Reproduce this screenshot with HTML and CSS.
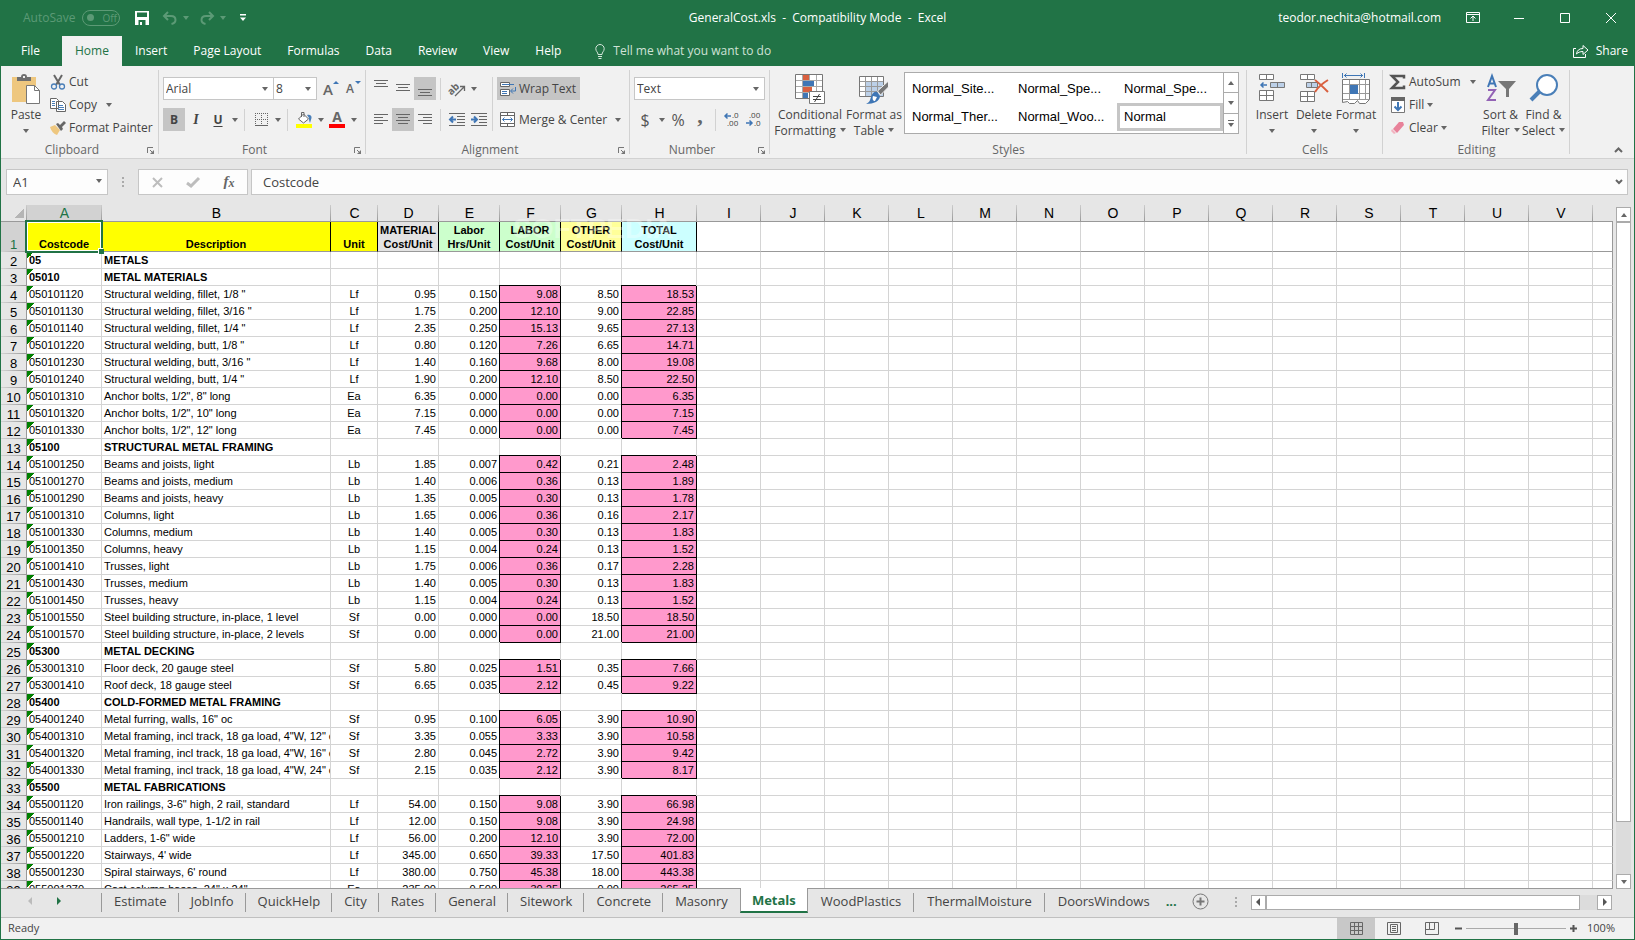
FILE: index.html
```html
<!DOCTYPE html>
<html lang="en">
<head>
    <meta charset="UTF-8">
    <meta name="viewport" content="width=device-width, initial-scale=1.0">
    <title>GeneralCost.xls - Excel</title>
    <link rel="stylesheet" href="styles.css">
</head>
<body>
    <header class="titlebar">
        <div class="quick">
            <label class="autosave" for="autosave">AutoSave</label>
            <span class="switch"><input type="checkbox" id="autosave" disabled>Off</span>
            <button type="button" class="quick-btn save" aria-label="Save"><svg width="14" height="14" viewBox="0 0 14 14"><path fill="#fff" fill-rule="evenodd" d="M0 0h14v14H0zM2 1.500v4.500h10V1.500zM3.500 9v5h7V9z"/><path fill="#fff" d="M5 11h2v3H5z"/></svg></button>
            <button type="button" class="quick-btn" aria-label="Undo"><svg width="16" height="14" viewBox="0 0 16 14" fill="none" stroke="#5c9a76" stroke-width="2"><path d="M6 1L2 5l4 4M2 5h7c3 0 4.500 1.500 4.500 4s-2 3.500-4 4"/></svg></button>
            <i class="caret faded"></i>
            <button type="button" class="quick-btn" aria-label="Redo"><svg width="16" height="14" viewBox="0 0 16 14" fill="none" stroke="#5c9a76" stroke-width="2"><path d="M10 1l4 4-4 4M14 5H7C4 5 2.500 6.500 2.500 9s2 3.500 4 4"/></svg></button>
            <i class="caret faded"></i>
            <button type="button" class="quick-btn more" aria-label="Customize"><svg width="6" height="8" viewBox="0 0 6 8" fill="#fff"><path d="M0 0h6v1.500H0zM0 3.500h6L3 7z"/></svg></button>
        </div>
        <div class="doc-title">GeneralCost.xls&nbsp; -&nbsp; Compatibility Mode&nbsp; -&nbsp; Excel</div>
        <div class="window-tools">
            <span class="account">teodor.nechita@hotmail.com</span>
            <button type="button" aria-label="Ribbon options"><svg width="14" height="11" viewBox="0 0 14 11" fill="none" stroke="#fff"><path d="M.5.5h13v10H.5zM.5 2.500h13M7 9V4.500M4.500 6.500L7 4l2.500 2.500"/></svg></button>
            <button type="button" aria-label="Minimize"><svg width="10" height="10" viewBox="0 0 10 10" stroke="#fff"><path d="M0 5.500h10"/></svg></button>
            <button type="button" aria-label="Maximize"><svg width="10" height="10" viewBox="0 0 10 10" fill="none" stroke="#fff"><path d="M.5.5h9v9h-9z"/></svg></button>
            <button type="button" aria-label="Close"><svg width="10" height="10" viewBox="0 0 10 10" stroke="#fff"><path d="M0 0l10 10M10 0L0 10"/></svg></button>
        </div>
    </header>

    <nav class="tabs">
        <button type="button" class="tab file">File</button>
        <button type="button" class="tab active">Home</button>
        <button type="button" class="tab">Insert</button>
        <button type="button" class="tab">Page Layout</button>
        <button type="button" class="tab">Formulas</button>
        <button type="button" class="tab">Data</button>
        <button type="button" class="tab">Review</button>
        <button type="button" class="tab">View</button>
        <button type="button" class="tab">Help</button>
        <button type="button" class="tab tell"><svg width="10" height="15" viewBox="0 0 10 15" fill="none" stroke="#d5e6db"><path d="M3 10.500C3 8 .8 7.500.8 4.700a4.200 4.200 0 0 1 8.400 0C9.200 7.500 7 8 7 10.500zM3 12.500h4M3.500 14.500h3"/></svg>Tell me what you want to do</button>
        <button type="button" class="share"><svg width="16" height="14" viewBox="0 0 16 14" fill="none" stroke="#fff"><path d="M3 4.500H.5v9h12V10M3.500 10C4 6.500 6 4.500 10 4.500V1.500l5 4.500-5 4.500v-3C7 7.500 5 8.500 3.500 10z"/></svg>Share</button>
    </nav>

    <section class="ribbon">
        <div class="group clipboard">
            <div class="group-body">
                <button type="button" class="large"><svg class="pic" width="30" height="32" viewBox="0 0 30 32"><path fill="#eec77f" d="M1 4h24v25H1z"/><path fill="#6f6f6f" d="M6 8V4h4c0-2 1-3 3-3s3 1 3 3h4v4z"/><path fill="#f0f0f0" d="M12 3h2v2h-2z"/><path fill="#fff" stroke="#777" d="M15.500 12.500h8l5 5v13h-13z"/><path fill="none" stroke="#777" d="M23.500 12.500v5h5"/></svg>Paste<i class="caret"></i></button>
                <div class="stack">
                    <button type="button" class="small"><svg width="16" height="16" viewBox="0 0 16 16" fill="none"><path stroke="#666" stroke-width="2" d="M4 1l6 10M12 1L6 11"/><circle cx="4" cy="12.500" r="2.500" stroke="#4a7fb8" stroke-width="1.300"/><circle cx="12" cy="12.500" r="2.500" stroke="#4a7fb8" stroke-width="1.300"/></svg>Cut</button>
                    <button type="button" class="small"><svg width="16" height="16" viewBox="0 0 16 16"><path fill="#fff" stroke="#666" d="M.5 1.500h6l2 2v8h-8zM6.500 4.500h6l3 3v7h-9z"/><path stroke="#4a7fb8" d="M2 4.500h3M2 6.500h3M2 8.500h3M8 8.500h5M8 10.500h6M8 12.500h6"/></svg>Copy<i class="caret gap"></i></button>
                    <button type="button" class="small"><svg width="16" height="16" viewBox="0 0 16 16"><path fill="#eec77f" d="M0 7l5-2 5 5-3 5c-3-1-6-4-7-8z"/><path fill="#666" d="M6 4l2-1 2 2 4-4 2 2-4 4 1 2-2 2z"/></svg>Format Painter</button>
                </div>
            </div>
            <div class="group-name"><span>Clipboard</span><button type="button" class="launcher" aria-label="Clipboard options"><svg width="7" height="7" viewBox="0 0 7 7"><path fill="none" stroke="#777" d="M.5 6V.5H6M3 3l3 3"/><path fill="#777" d="M7 3v4H3z"/></svg></button></div>
        </div>

        <div class="group font">
            <div class="group-body rows">
                <div class="row">
                    <span class="combo font-name"><select aria-label="Font"><option>Arial</option></select></span>
                    <span class="combo font-size"><select aria-label="Font size"><option>8</option></select></span>
                    <button type="button" class="tool grow">A<i class="up"></i></button>
                    <button type="button" class="tool shrink">A<i class="down"></i></button>
                </div>
                <div class="row">
                    <button type="button" class="tool on bold">B</button>
                    <button type="button" class="tool italic">I</button>
                    <button type="button" class="tool underline">U</button>
                    <button type="button" class="drop" aria-label="Underline style"><i class="caret"></i></button>
                    <i class="sep"></i>
                    <button type="button" class="tool" aria-label="Borders"><svg width="13" height="13" viewBox="0 0 13 13" stroke="#666"><path stroke-dasharray="1 1" d="M0 .5h13M0 6.500h13M.5 0v13M6.500 0v13M12.500 0v13"/><path d="M0 12.500h13"/></svg></button>
                    <button type="button" class="drop" aria-label="Border style"><i class="caret"></i></button>
                    <i class="sep"></i>
                    <button type="button" class="tool" aria-label="Fill color"><svg width="16" height="17" viewBox="0 0 16 17"><path fill="#fff" stroke="#666" d="M2.500 8l5-5 5 5-5 4z"/><path fill="none" stroke="#666" d="M5.500 6V1.500h2.500V6"/><path fill="#4a7fb8" d="M11 4c3-1 5 1 4.500 3L14 12c-1-2-1-4-1-5z"/><path fill="#ff0" d="M0 13h16v4H0z"/></svg></button>
                    <button type="button" class="drop" aria-label="Fill colors"><i class="caret"></i></button>
                    <button type="button" class="tool font-color">A</button>
                    <button type="button" class="drop" aria-label="Font colors"><i class="caret"></i></button>
                </div>
            </div>
            <div class="group-name"><span>Font</span><button type="button" class="launcher" aria-label="Font options"><svg width="7" height="7" viewBox="0 0 7 7"><path fill="none" stroke="#777" d="M.5 6V.5H6M3 3l3 3"/><path fill="#777" d="M7 3v4H3z"/></svg></button></div>
        </div>

        <div class="group alignment">
            <div class="group-body">
                <div class="rows">
                    <div class="row">
                        <button type="button" class="tool" aria-label="Top align"><svg width="14" height="17" viewBox="0 0 14 17" stroke="#666"><path d="M0 .5h14M2 3.500h10M0 6.500h14"/></svg></button>
                        <button type="button" class="tool" aria-label="Middle align"><svg width="14" height="17" viewBox="0 0 14 17" stroke="#666"><path d="M0 4.500h14M2 7.500h10M0 10.500h14"/></svg></button>
                        <button type="button" class="tool on" aria-label="Bottom align"><svg width="14" height="17" viewBox="0 0 14 17" stroke="#666"><path d="M0 9.500h14M2 12.500h10M0 15.500h14"/></svg></button>
                        <i class="sep"></i>
                        <button type="button" class="tool" aria-label="Orientation"><svg width="17" height="16" viewBox="0 0 17 16"><text class="orient" x="-1" y="11" transform="rotate(-45 5 9)">ab</text><path fill="none" stroke="#666" stroke-width="1.300" d="M6 15l9-9M11 5.500h4.500V10"/></svg></button>
                        <button type="button" class="drop" aria-label="Orientation options"><i class="caret"></i></button>
                    </div>
                    <div class="row">
                        <button type="button" class="tool" aria-label="Align left"><svg width="14" height="11" viewBox="0 0 14 11" stroke="#666"><path d="M0 .5h14M0 3.500h9M0 6.500h14M0 9.500h9"/></svg></button>
                        <button type="button" class="tool on" aria-label="Center"><svg width="14" height="11" viewBox="0 0 14 11" stroke="#666"><path d="M0 .5h14M2 3.500h10M0 6.500h14M2 9.500h10"/></svg></button>
                        <button type="button" class="tool" aria-label="Align right"><svg width="14" height="11" viewBox="0 0 14 11" stroke="#666"><path d="M0 .5h14M5 3.500h9M0 6.500h14M5 9.500h9"/></svg></button>
                        <i class="sep"></i>
                        <button type="button" class="tool" aria-label="Decrease indent"><svg width="16" height="13" viewBox="0 0 16 13"><path stroke="#666" d="M0 .5h16M8 3.500h8M8 6.500h8M8 9.500h8M0 12.500h16"/><path fill="none" stroke="#3f76b5" stroke-width="2" d="M7 6.500H1M4 3.500l-3 3 3 3"/></svg></button>
                        <button type="button" class="tool" aria-label="Increase indent"><svg width="16" height="13" viewBox="0 0 16 13"><path stroke="#666" d="M0 .5h16M8 3.500h8M8 6.500h8M8 9.500h8M0 12.500h16"/><path fill="none" stroke="#3f76b5" stroke-width="2" d="M0 6.500h6M3 3.500l3 3-3 3"/></svg></button>
                    </div>
                </div>
                <i class="sep tall"></i>
                <div class="rows">
                    <button type="button" class="wide on"><svg width="17" height="16" viewBox="0 0 17 16"><path fill="#fff" stroke="#666" d="M.5 1.500h9v4h-9zM.5 8.500h9v6h-9z"/><path fill="none" stroke="#3f76b5" d="M2 3.500h12M2 10.500h5M2 12.500h5M15.500 6v4H11M13 7.500L10.500 10l2.500 2.500"/></svg>Wrap Text</button>
                    <button type="button" class="wide"><svg width="17" height="16" viewBox="0 0 17 16"><path fill="#fff" stroke="#666" d="M.5.5h14v14H.5zM.5 3.500h14M.5 11.500h14M7.500.5v3M7.500 11.500v3"/><path fill="none" stroke="#3f76b5" d="M2.500 7.500h10M4.500 5.500l-2 2 2 2M10.500 5.500l2 2-2 2"/></svg>Merge &amp; Center<i class="caret gap"></i></button>
                </div>
            </div>
            <div class="group-name"><span>Alignment</span><button type="button" class="launcher" aria-label="Alignment options"><svg width="7" height="7" viewBox="0 0 7 7"><path fill="none" stroke="#777" d="M.5 6V.5H6M3 3l3 3"/><path fill="#777" d="M7 3v4H3z"/></svg></button></div>
        </div>

        <div class="group number">
            <div class="group-body rows">
                <div class="row">
                    <span class="combo format"><select aria-label="Number format"><option>Text</option></select></span>
                </div>
                <div class="row">
                    <button type="button" class="tool sign">$</button>
                    <button type="button" class="drop" aria-label="Currency"><i class="caret"></i></button>
                    <button type="button" class="tool sign">%</button>
                    <button type="button" class="tool comma">,</button>
                    <i class="sep"></i>
                    <button type="button" class="tool" aria-label="Increase decimal"><svg class="digits" width="16" height="15" viewBox="0 0 16 15"><text x="8" y="6">.0</text><text x="3" y="14">.00</text><path fill="none" stroke="#3f76b5" stroke-width="1.500" d="M7 4H1M3.500 1.500L1 4l2.500 2.500"/></svg></button>
                    <button type="button" class="tool" aria-label="Decrease decimal"><svg class="digits" width="16" height="15" viewBox="0 0 16 15"><text x="3" y="6">.00</text><text x="8" y="14">.0</text><path fill="none" stroke="#3f76b5" stroke-width="1.500" d="M0 11h6M3.500 8.500L6 11l-2.500 2.500"/></svg></button>
                </div>
            </div>
            <div class="group-name"><span>Number</span><button type="button" class="launcher" aria-label="Number options"><svg width="7" height="7" viewBox="0 0 7 7"><path fill="none" stroke="#777" d="M.5 6V.5H6M3 3l3 3"/><path fill="#777" d="M7 3v4H3z"/></svg></button></div>
        </div>

        <div class="group styles">
            <div class="group-body">
                <button type="button" class="large cond"><svg class="pic" width="30" height="32" viewBox="0 0 30 32"><path fill="#fff" stroke="#777" d="M.5 1.500h27v24H.5z"/><path stroke="#aaa" d="M7.500 2v23M14.500 2v23M21.500 2v23M1 7.500h26M1 13.500h26M1 19.500h26"/><path fill="#d9603f" d="M8 2h6v5H8zM8 14h9v5H8z"/><path fill="#3f76b5" d="M8 8h11v5H8zM8 20h5v5H8z"/><path fill="#fff" stroke="#777" d="M14.500 18.500h15v12h-15z"/><path stroke="#444" d="M18 23.500h8M18 26.500h8M24.500 21l-5 8"/></svg>Conditional<span>Formatting<i class="caret"></i></span></button>
                <button type="button" class="large table-style"><svg class="pic" width="30" height="32" viewBox="0 0 30 32"><path fill="#fff" stroke="#777" d="M.5 3.500h24v20H.5z"/><path fill="#bcd0e8" d="M7 9h17v14H7z"/><path stroke="#999" d="M6.500 4v19M12.500 4v19M18.500 4v19M1 8.500h23M1 13.500h23M1 18.500h23"/><path fill="#777" stroke="#f1f1f1" d="M29.500 8v6l-8 8-3-4z"/><path fill="#3f76b5" d="M18 19l3 4c0 5-6 8-14 8 4-2 4-4 5-7 1-4 4-6 6-5z"/><path fill="#fff" d="M14 23l4 1-2 4c-2 0-3-2-2-5z"/></svg>Format as<span>Table<i class="caret"></i></span></button>
                <div class="gallery">
                    <div class="gallery-items">
                        <button type="button">Normal_Site...</button>
                        <button type="button">Normal_Spe...</button>
                        <button type="button">Normal_Spe...</button>
                        <button type="button">Normal_Ther...</button>
                        <button type="button">Normal_Woo...</button>
                        <button type="button" class="picked">Normal</button>
                    </div>
                    <div class="gallery-scroll">
                        <button type="button" aria-label="Previous styles"><i class="caret flip"></i></button>
                        <button type="button" aria-label="Next styles"><i class="caret"></i></button>
                        <button type="button" class="more" aria-label="More styles"><i class="caret"></i></button>
                    </div>
                </div>
            </div>
            <div class="group-name"><span>Styles</span></div>
        </div>

        <div class="group cells">
            <div class="group-body">
                <button type="button" class="large"><svg class="pic" width="28" height="32" viewBox="0 0 28 32"><path fill="#fff" stroke="#777" d="M1.500 1.500h14v5h-14zM8.500 1.500v5M1.500 17.500h14v10h-14zM8.500 17.500v10M1.500 22.500h14"/><path fill="#bcd0e8" stroke="#777" d="M12.500 9.500h14v5h-14zM19.500 9.500v5"/><path fill="none" stroke="#3f76b5" stroke-width="1.500" d="M9 12H3M5.500 9.500L3 12l2.500 2.500"/></svg>Insert<i class="caret"></i></button>
                <button type="button" class="large"><svg class="pic" width="30" height="32" viewBox="0 0 30 32"><path fill="#fff" stroke="#777" d="M1.500 1.500h14v5h-14zM8.500 1.500v5M1.500 18.500h14v10h-14zM8.500 18.500v10M1.500 23.500h14"/><path fill="#bcd0e8" stroke="#777" d="M7.500 9.500h11v5h-11zM12.500 9.500v5"/><path fill="none" stroke="#d9603f" stroke-width="2" d="M16 7c4 3 9 8 13 12M29 7c-5 3-10 7-13 12"/></svg>Delete<i class="caret"></i></button>
                <button type="button" class="large"><svg class="pic" width="28" height="32" viewBox="0 0 28 32"><path fill="none" stroke="#3f76b5" d="M.5 0v5M22.500 0v5M2 2.500h19M4.500.5l-2 2 2 2M18.500.5l2 2-2 2"/><path fill="#fff" stroke="#777" d="M.5 6.500h27v20l-4 4h-6l-2-3-3 3h-5l-2-2-5 1z"/><path stroke="#999" d="M7.500 7v19M17.500 7v19M1 11.500h26M1 20.500h26M1 26.500h26M23.500 7v19"/><path fill="#3f76b5" d="M8 12h8v9H8z"/></svg>Format<i class="caret"></i></button>
            </div>
            <div class="group-name"><span>Cells</span></div>
        </div>

        <div class="group editing">
            <div class="group-body">
                <div class="stack">
                    <button type="button" class="small"><svg width="16" height="16" viewBox="0 0 16 16"><path fill="none" stroke="#555" stroke-width="2.500" d="M14 4.500V2H2l6 6-6 6h12v-2.500"/></svg>AutoSum<i class="caret gap"></i></button>
                    <button type="button" class="small"><svg width="16" height="16" viewBox="0 0 16 16"><path fill="#fff" stroke="#777" d="M1.500.5h13v15h-13z"/><path fill="#666" d="M1 0h14v4H1z"/><path fill="none" stroke="#3f76b5" stroke-width="2" d="M8 5v8M4.500 9.500L8 13l3.500-3.500"/></svg>Fill<i class="caret"></i></button>
                    <button type="button" class="small"><svg width="16" height="16" viewBox="0 0 16 16"><path fill="#e8829a" d="M9 2h4l1 3-7 8-4-4z"/><path fill="#f2b3c0" d="M2 9l4 4-2 1-3-3z"/></svg>Clear<i class="caret"></i></button>
                </div>
                <button type="button" class="large"><svg class="pic" width="30" height="32" viewBox="0 0 30 32"><g fill="none" stroke-width="2"><path stroke="#3f76b5" d="M2 14L6 3l4 11M3.500 10.500h5"/><path stroke="#9363b5" d="M2 17h7L2 27h8"/></g><path fill="#777" d="M12 8h18l-7 8v8h-3v-8z"/></svg>Sort &amp;<span>Filter<i class="caret"></i></span></button>
                <button type="button" class="large"><svg class="pic" width="30" height="32" viewBox="0 0 30 32" fill="none" stroke="#4a7fb8"><path stroke-width="4" d="M2 27l9-9"/><circle cx="18" cy="12" r="10" fill="#fff" stroke-width="2"/></svg>Find &amp;<span>Select<i class="caret"></i></span></button>
            </div>
            <div class="group-name"><span>Editing</span></div>
        </div>
        <button type="button" class="collapse" aria-label="Collapse ribbon"><svg width="9" height="6" viewBox="0 0 9 6" fill="none" stroke="#666" stroke-width="2"><path d="M1 5l3.500-3.500L8 5"/></svg></button>
    </section>

    <section class="formula-bar">
        <span class="combo name-box"><input type="text" value="A1" aria-label="Name box"></span>
        <i class="grip"></i>
        <div class="formula-tools">
            <button type="button" aria-label="Cancel"><svg width="11" height="11" viewBox="0 0 11 11" stroke="#bdbdbd" stroke-width="2"><path d="M1 1l9 9M10 1l-9 9"/></svg></button>
            <button type="button" aria-label="Enter"><svg width="14" height="11" viewBox="0 0 14 11" fill="none" stroke="#bdbdbd" stroke-width="3"><path d="M1 6l4 3 8-8"/></svg></button>
            <button type="button" class="fx">f<sub>x</sub></button>
        </div>
        <div class="formula">
            <input type="text" value="Costcode" aria-label="Formula">
            <svg width="8" height="6" viewBox="0 0 8 6" fill="none" stroke="#666" stroke-width="2"><path d="M1 1l3 3 3-3"/></svg>
        </div>
    </section>

    <main class="sheet">
        <div class="grid">
            <table id="cells"></table>
            <span class="watermark">SOFTPEDIA</span>
        </div>
        <div class="vscroll">
            <button type="button" aria-label="Scroll up"><i class="caret flip"></i></button>
            <div class="track"><div class="thumb"></div></div>
            <button type="button" aria-label="Scroll down"><i class="caret"></i></button>
        </div>
    </main>

    <nav class="sheet-tabs">
        <div class="sheet-nav"><i class="arrow left faded"></i><i class="arrow right green"></i></div>
        <button type="button">Estimate</button>
        <button type="button">JobInfo</button>
        <button type="button">QuickHelp</button>
        <button type="button">City</button>
        <button type="button">Rates</button>
        <button type="button">General</button>
        <button type="button">Sitework</button>
        <button type="button">Concrete</button>
        <button type="button" class="before">Masonry</button>
        <button type="button" class="current">Metals</button>
        <button type="button">WoodPlastics</button>
        <button type="button">ThermalMoisture</button>
        <button type="button" class="last">DoorsWindows</button>
        <button type="button" class="dots">...</button>
        <button type="button" class="add" aria-label="New sheet"><svg width="17" height="17" viewBox="0 0 17 17" fill="none" stroke="#777"><circle cx="8.500" cy="8.500" r="7.500"/><path stroke-width="2" d="M8.500 4.500v8M4.500 8.500h8"/></svg></button>
        <div class="hscroll">
            <i class="grip"></i>
            <button type="button" aria-label="Scroll left"><i class="arrow left"></i></button>
            <div class="track"><div class="thumb"></div></div>
            <button type="button" aria-label="Scroll right"><i class="arrow right"></i></button>
        </div>
    </nav>

    <footer class="status">
        <span class="ready">Ready</span>
        <button type="button" class="view on" aria-label="Normal view"><svg width="13" height="13" viewBox="0 0 13 13" fill="none" stroke="#666"><path d="M.5.5h12v12H.5zM4.500.5v12M8.500.5v12M.5 4.500h12M.5 8.500h12"/></svg></button>
        <button type="button" class="view" aria-label="Page layout view"><svg width="14" height="13" viewBox="0 0 14 13" fill="none" stroke="#666"><path d="M.5.5h13v12H.5zM3.500 2.500h7v8h-7zM5 4.500h4M5 6.500h4M5 8.500h4"/></svg></button>
        <button type="button" class="view" aria-label="Page break view"><svg width="14" height="13" viewBox="0 0 14 13" fill="none" stroke="#666"><path d="M.5.5h13v12H.5zM4.500.5v7h5v-7M.5 7.500h4"/></svg></button>
        <button type="button" class="zoom-btn" aria-label="Zoom out"><svg width="7" height="7" viewBox="0 0 7 7" stroke="#555" stroke-width="2"><path d="M0 3.500h7"/></svg></button>
        <input type="range" class="zoom" min="0" max="200" value="100" aria-label="Zoom">
        <button type="button" class="zoom-btn" aria-label="Zoom in"><svg width="7" height="7" viewBox="0 0 7 7" stroke="#555" stroke-width="2"><path d="M0 3.500h7M3.500 0v7"/></svg></button>
        <span class="percent">100%</span>
    </footer>

    <script src="script.js"></script>
</body>
</html>
```
FILE: styles.css
```css
* {
    box-sizing: border-box;
}

body {
    margin: 0;
    height: 100vh;
    display: flex;
    flex-direction: column;
    overflow: hidden;
    border: 1px solid #217346;
    border-top: 0;
    background: #e6e6e6;
    color: #444;
    font: 12px/16px "Open Sans", sans-serif;
}

button,
input,
select {
    margin: 0;
    padding: 0;
    border: 0;
    background: none;
    color: inherit;
    font: inherit;
}

svg {
    display: block;
    flex: none;
    overflow: visible;
}

/* small arrows */
.caret {
    flex: none;
    display: inline-block;
    border: 3px solid transparent;
    border-top: 4px solid #666;
    border-bottom: 0;
}

.caret.flip {
    border-top: 0;
    border-bottom: 4px solid #666;
}

.caret.faded {
    border-top-color: #5c9a76;
}

.arrow {
    border: 4px solid transparent;
}

.arrow.left {
    border-left: 0;
    border-right-color: #555;
}

.arrow.right {
    border-right: 0;
    border-left-color: #555;
}

.arrow.faded {
    border-right-color: #bbb;
}

.arrow.green {
    border-left-color: #217346;
}

/* title bar */
.titlebar {
    flex: none;
    height: 36px;
    display: grid;
    grid-template-columns: 1fr auto 1fr;
    align-items: center;
    padding-bottom: 1px;
    background: #217346;
    color: #fff;
}

.quick {
    display: flex;
    align-items: center;
    padding-left: 22px;
}

.autosave,
.switch {
    color: #5c9a76;
}

.switch {
    display: flex;
    align-items: center;
    gap: 8px;
    width: 38px;
    height: 16px;
    margin: 0 15px 0 7px;
    padding-left: 4px;
    border: 1px solid #5c9a76;
    border-radius: 8px;
    font-size: 10px;
}

.switch input {
    appearance: none;
    width: 7px;
    height: 7px;
    border-radius: 50%;
    background: #5c9a76;
}

.quick-btn {
    margin-left: 10px;
    margin-right: 5px;
}

.quick-btn.save {
    margin: 0 3px 0 0;
}

.quick-btn.more {
    margin: 0 0 0 14px;
}

.window-tools {
    display: flex;
    justify-content: flex-end;
    align-items: center;
}

.window-tools button {
    width: 46px;
    height: 30px;
    display: grid;
    place-items: center;
}

.account {
    margin-right: 9px;
}

/* ribbon tabs */
.tabs {
    flex: none;
    height: 30px;
    display: flex;
    background: #217346;
    color: #fff;
}

.tab {
    padding: 0 13px;
    white-space: nowrap;
}

.tab.file {
    padding: 0 22px 0 20px;
}

.tab.active {
    background: #f1f1f1;
    color: #217346;
}

.tab.tell {
    display: flex;
    align-items: center;
    gap: 8px;
    margin-left: 8px;
    color: #cfe2d6;
}

.share {
    display: flex;
    align-items: center;
    gap: 7px;
    margin-left: auto;
    padding-right: 6px;
}

/* ribbon */
.ribbon {
    flex: none;
    height: 93px;
    display: flex;
    padding-top: 4px;
    background: #f1f1f1;
    border-bottom: 1px solid #d2d2d2;
}

.group {
    flex: none;
    display: flex;
    flex-direction: column;
    background: linear-gradient(#d2d2d2, #d2d2d2) right top / 1px 84px no-repeat;
}

.clipboard {
    width: 158px;
}

.font {
    width: 207px;
}

.alignment {
    width: 264px;
}

.number {
    width: 140px;
}

.styles {
    width: 477px;
}

.cells {
    width: 136px;
}

.editing {
    width: 187px;
}

.group-body {
    display: flex;
    height: 72px;
    padding-left: 4px;
}

.group-name {
    display: flex;
    align-items: center;
    color: #666;
}

.group-name span {
    flex: 1;
    text-align: center;
}

.launcher {
    width: 16px;
    padding-left: 4px;
}

.rows {
    display: flex;
    flex-direction: column;
    align-items: flex-start;
    gap: 8px;
    padding-top: 7px;
}

.row {
    display: flex;
    align-items: center;
    height: 23px;
}

.large {
    display: flex;
    flex-direction: column;
    align-items: center;
    white-space: nowrap;
}

.large .pic {
    margin: 3px 0 2px;
}

.large > .caret {
    margin-top: 6px;
}

.large span .caret {
    margin-left: 4px;
    vertical-align: 3px;
}

.clipboard .large {
    width: 42px;
}

.stack {
    padding-left: 3px;
}

.small {
    display: flex;
    align-items: center;
    height: 23px;
    gap: 3px;
    white-space: nowrap;
}

.small .caret.gap {
    margin-left: 6px;
}

.combo {
    position: relative;
    display: block;
    height: 23px;
    border: 1px solid #c6c6c6;
    background: #fff;
}

.combo::after {
    content: "";
    position: absolute;
    top: 9px;
    right: 5px;
    border: 3px solid transparent;
    border-top: 4px solid #666;
    border-bottom: 0;
    pointer-events: none;
}

.combo select,
.combo input {
    appearance: none;
    width: 100%;
    height: 100%;
    padding-left: 2px;
}

.font-name {
    width: 111px;
}

.font-size {
    width: 44px;
    margin-left: -1px;
}

.format {
    width: 131px;
}

.tool {
    flex: none;
    position: relative;
    display: grid;
    place-items: center;
    width: 22px;
    height: 23px;
}

.tool.on,
.wide.on {
    background: #c5c5c5;
}

.drop {
    width: 11px;
    height: 23px;
    display: grid;
    place-items: center;
}

.sep {
    flex: none;
    width: 1px;
    height: 22px;
    margin: 0 5px 0 4px;
    background: #d2d2d2;
}

.sep.tall {
    height: 54px;
    margin: 7px 4px 0 2px;
}

.grow,
.shrink {
    font-weight: 600;
    color: #666;
}

.grow {
    font-size: 15px;
}

.grow .up,
.shrink .down {
    position: absolute;
    top: 4px;
    right: 0;
    border: 3px solid transparent;
}

.grow .up {
    border-top: 0;
    border-bottom: 3px solid #3f76b5;
}

.shrink .down {
    border-bottom: 0;
    border-top: 3px solid #3f76b5;
}

.bold,
.underline {
    font-weight: 700;
}

.italic {
    font: italic 700 14px "Liberation Serif", serif;
}

.underline {
    text-decoration: underline;
    text-underline-offset: 2px;
}

.font-color {
    height: 17px;
    border: 3px solid transparent;
    border-width: 0 3px;
    box-shadow: inset 0 -4px red;
    font-size: 14px;
    font-weight: 700;
    line-height: 12px;
    align-items: start;
    color: #666;
}

.orient {
    font: 700 10px "Open Sans", sans-serif;
    fill: #666;
}

.digits text {
    font: 8px "Open Sans", sans-serif;
    fill: #444;
}

.wide {
    display: flex;
    align-items: center;
    gap: 2px;
    height: 23px;
    padding: 0 4px 0 3px;
    white-space: nowrap;
}

.wide .gap {
    margin-left: 6px;
}

.sign {
    font-size: 16px;
    color: #555;
}

.comma {
    padding-bottom: 12px;
    font: 700 22px/16px "Liberation Serif", serif;
    color: #666;
}

/* styles gallery */
.cond {
    width: 72px;
}

.table-style {
    width: 56px;
}

.gallery {
    display: flex;
    height: 62px;
    margin: 2px 0 0 2px;
    border: 1px solid #ababab;
    background: #fff;
    color: #000;
    font: 13px/16px "Liberation Sans", sans-serif;
}

.gallery-items {
    display: grid;
    grid-template-columns: repeat(3, 106px);
    grid-template-rows: 28px 28px;
    padding: 2px 0;
}

.gallery-items button {
    padding-left: 7px;
    text-align: left;
}

.gallery-items .picked {
    padding-left: 4px;
    border: 3px solid #c6c6c6;
}

.gallery-scroll {
    display: flex;
    flex-direction: column;
    width: 15px;
    border-left: 1px solid #ababab;
}

.gallery-scroll button {
    flex: 1;
    display: grid;
    place-items: center;
}

.gallery-scroll button + button {
    border-top: 1px solid #ababab;
}

.gallery-scroll .more {
    align-content: center;
    gap: 2px;
}

.gallery-scroll .more::before {
    content: "";
    width: 6px;
    height: 1px;
    background: #666;
}

.cells .large {
    width: 42px;
}

.editing .stack {
    width: 92px;
}

.editing .large {
    width: 43px;
}

.collapse {
    align-self: flex-end;
    margin: 0 11px 5px auto;
}

/* formula bar */
.formula-bar {
    flex: none;
    display: flex;
    align-items: center;
    height: 46px;
    padding: 0 6px 0 5px;
    font-size: 13px;
}

.name-box,
.formula-tools,
.formula {
    height: 26px;
    border: 1px solid #c6c6c6;
    background: #fdfdfd;
}

.name-box {
    width: 102px;
}

.name-box input {
    padding-left: 6px;
}

.grip {
    width: 2px;
    height: 10px;
    margin: 0 14px;
    background: repeating-linear-gradient(#aaa 0 2px, transparent 2px 4px);
}

.formula-tools {
    display: flex;
    width: 110px;
    margin-right: 3px;
}

.formula-tools button {
    flex: 1;
    display: grid;
    place-items: center;
}

.formula-tools .fx {
    display: block;
    font: italic 700 15px "Liberation Serif", serif;
    color: #666;
}

.fx sub {
    font-size: 12px;
    vertical-align: -1px;
}

.formula {
    flex: 1;
    display: flex;
    align-items: center;
    padding: 0 4px 0 11px;
}

.formula input {
    flex: 1;
}

/* sheet */
.sheet {
    flex: 1;
    min-height: 0;
    display: flex;
}

.grid {
    flex: 1;
    min-width: 0;
    position: relative;
    overflow: hidden;
    border-bottom: 1px solid #999;
}

.grid table {
    width: 100%;
    table-layout: fixed;
    border-spacing: 0;
    color: #000;
    font: 11px/15px "Liberation Sans", sans-serif;
}

.col-n {
    width: 26px;
}

.col-a,
.col-h {
    width: 75px;
}

.col-b {
    width: 229px;
}

.col-c {
    width: 47px;
}

.col-d {
    width: 61px;
}

.col-i {
    width: 64px;
}

.grid th {
    padding: 0;
    font-weight: 400;
}

.grid thead th {
    height: 17px;
    border-bottom: 1px solid #999;
    background: linear-gradient(#ccc, #999) right / 1px 100% no-repeat #e6e6e6;
    font-size: 14px;
}

.grid tbody th {
    border-right: 1px solid #999;
    background: linear-gradient(90deg, #d4d4d4, #999) bottom / 100% 1px no-repeat #e6e6e6;
    font-size: 13px;
    vertical-align: bottom;
}

.grid thead th:last-child {
    background: #e6e6e6;
}

.grid .corner {
    background: linear-gradient(135deg, transparent 50%, #b5b5b5 50%) 14px 4px / 9px 9px no-repeat, linear-gradient(#ccc, #999) right / 1px 100% no-repeat;
}

.grid th.chosen {
    background-color: #d2d2d2;
    color: #217346;
}

.grid td {
    height: 17px;
    padding: 1px 2px 0;
    border-right: 1px solid #d4d4d4;
    border-bottom: 1px solid #d4d4d4;
    background: #fff;
    overflow: hidden;
    white-space: nowrap;
    text-align: right;
}

.grid td:last-child {
    border-right-color: #999;
}

.grid .titles td {
    height: 30px;
    padding: 0;
    border-bottom-color: #999;
    font-weight: 700;
    line-height: 14px;
    text-align: center;
    vertical-align: bottom;
}

.grid .titles td.head {
    border-right-color: #000;
}

.grid .head.yellow {
    background: #ff0;
}

.grid .head.gray {
    background: #e3e3e3;
}

.grid .head.green {
    background: #cfc;
}

.grid .head.cream {
    background: #ff9;
}

.grid .head.cyan {
    background: #cff;
}

.grid td.code {
    background: linear-gradient(135deg, #008000 50%, transparent 50%) 0 0 / 7px 7px no-repeat #fff;
    text-align: left;
}

.grid td.text {
    text-align: left;
}

.grid td.unit {
    text-align: center;
}

.grid td.pink {
    border-color: #000;
    background: #f9c;
    box-shadow: -1px -1px #000;
}

.grid .section td {
    font-weight: 700;
}

/* active cell frame with its fill handle */
.grid .titles td.selected {
    position: relative;
    overflow: visible;
}

.selected::before {
    content: "";
    position: absolute;
    inset: -2px;
    border: 2px solid #217346;
    box-shadow: inset 0 0 0 1px #fff;
}

.selected::after {
    content: "";
    position: absolute;
    right: -3px;
    bottom: -3px;
    width: 5px;
    height: 5px;
    background: #217346;
    box-shadow: -1px -1px #fff;
}

.watermark {
    position: absolute;
    top: 8px;
    left: 512px;
    color: #fff;
    font: 700 28px/32px "Liberation Sans", sans-serif;
    opacity: 0.3;
}

/* scrollbars */
.vscroll {
    flex: none;
    display: flex;
    flex-direction: column;
    width: 15px;
    margin: 2px 3px 0 3px;
}

.vscroll button,
.hscroll button {
    flex: none;
    display: grid;
    place-items: center;
    width: 15px;
    height: 15px;
    border: 1px solid #ababab;
    background: #fff;
}

.track {
    flex: 1;
    background: #dcdcdc;
}

.thumb {
    border: 1px solid #ababab;
    background: #fff;
}

.vscroll .thumb {
    height: 92%;
}

.hscroll .thumb {
    width: 95%;
    height: 15px;
}

/* sheet tabs */
.sheet-tabs {
    flex: none;
    display: flex;
    height: 29px;
    padding-right: 22px;
    border-bottom: 1px solid #c0c0c0;
    font-size: 13px;
}

.sheet-tabs > button {
    position: relative;
    height: 24px;
    padding: 0 12px;
}

.current ~ button {
    padding: 0 13px;
}

.sheet-tabs > button::after {
    content: "";
    position: absolute;
    top: 4px;
    right: 0;
    width: 1px;
    height: 19px;
    background: #999;
}

.sheet-tabs > button.before::after,
.sheet-tabs > button.current::after,
.sheet-tabs > button.last::after,
.sheet-tabs > button.dots::after,
.sheet-tabs > button.add::after {
    display: none;
}

.sheet-nav {
    flex: none;
    display: flex;
    align-items: center;
    gap: 25px;
    width: 101px;
    height: 24px;
    padding-left: 27px;
    background: linear-gradient(#999, #999) right 4px / 1px 19px no-repeat;
}

.sheet-tabs > .current {
    height: 25px;
    margin-top: -1px;
    padding: 0 11px;
    border: 1px solid #999;
    border-top: 0;
    border-bottom: 2px solid #217346;
    background: #fff;
    color: #217346;
    font-weight: 700;
}

.sheet-tabs > .dots {
    padding: 0 3px;
    color: #217346;
    font-weight: 700;
}

.sheet-tabs > .add {
    padding: 0 12px;
}

.hscroll {
    flex: 1;
    display: flex;
    align-items: center;
    height: 28px;
    padding-bottom: 2px;
}

/* status bar */
.status {
    flex: none;
    display: flex;
    align-items: center;
    height: 21px;
    padding-right: 19px;
    background: #f1f1f1;
    font-size: 11px;
}

.ready {
    flex: 1;
    padding: 0 0 2px 7px;
}

.view {
    display: grid;
    place-items: center;
    width: 38px;
    height: 21px;
}

.view.on {
    background: #c8c8c8;
}

.zoom-btn {
    padding: 0 4px;
}

.zoom {
    appearance: none;
    width: 100px;
    height: 12px;
    background: linear-gradient(#aaa, #aaa) center / 100% 1px no-repeat;
}

.zoom::-webkit-slider-thumb {
    appearance: none;
    width: 4px;
    height: 12px;
    background: #666;
}

.percent {
    padding: 0 0 2px 6px;
}
```
FILE: script.js
```js
// code, description, unit, material, labor hrs, labor cost, other, total
const rows = [
    ["05", "METALS"],
    ["05010", "METAL MATERIALS"],
    ["050101120", "Structural welding, fillet, 1/8 \"", "Lf", "0.95", "0.150", "9.08", "8.50", "18.53"],
    ["050101130", "Structural welding, fillet, 3/16 \"", "Lf", "1.75", "0.200", "12.10", "9.00", "22.85"],
    ["050101140", "Structural welding, fillet, 1/4 \"", "Lf", "2.35", "0.250", "15.13", "9.65", "27.13"],
    ["050101220", "Structural welding, butt, 1/8 \"", "Lf", "0.80", "0.120", "7.26", "6.65", "14.71"],
    ["050101230", "Structural welding, butt, 3/16 \"", "Lf", "1.40", "0.160", "9.68", "8.00", "19.08"],
    ["050101240", "Structural welding, butt, 1/4 \"", "Lf", "1.90", "0.200", "12.10", "8.50", "22.50"],
    ["050101310", "Anchor bolts, 1/2\", 8\" long", "Ea", "6.35", "0.000", "0.00", "0.00", "6.35"],
    ["050101320", "Anchor bolts, 1/2\", 10\" long", "Ea", "7.15", "0.000", "0.00", "0.00", "7.15"],
    ["050101330", "Anchor bolts, 1/2\", 12\" long", "Ea", "7.45", "0.000", "0.00", "0.00", "7.45"],
    ["05100", "STRUCTURAL METAL FRAMING"],
    ["051001250", "Beams and joists, light", "Lb", "1.85", "0.007", "0.42", "0.21", "2.48"],
    ["051001270", "Beams and joists, medium", "Lb", "1.40", "0.006", "0.36", "0.13", "1.89"],
    ["051001290", "Beams and joists, heavy", "Lb", "1.35", "0.005", "0.30", "0.13", "1.78"],
    ["051001310", "Columns, light", "Lb", "1.65", "0.006", "0.36", "0.16", "2.17"],
    ["051001330", "Columns, medium", "Lb", "1.40", "0.005", "0.30", "0.13", "1.83"],
    ["051001350", "Columns, heavy", "Lb", "1.15", "0.004", "0.24", "0.13", "1.52"],
    ["051001410", "Trusses, light", "Lb", "1.75", "0.006", "0.36", "0.17", "2.28"],
    ["051001430", "Trusses, medium", "Lb", "1.40", "0.005", "0.30", "0.13", "1.83"],
    ["051001450", "Trusses, heavy", "Lb", "1.15", "0.004", "0.24", "0.13", "1.52"],
    ["051001550", "Steel building structure, in-place, 1 level", "Sf", "0.00", "0.000", "0.00", "18.50", "18.50"],
    ["051001570", "Steel building structure, in-place, 2 levels", "Sf", "0.00", "0.000", "0.00", "21.00", "21.00"],
    ["05300", "METAL DECKING"],
    ["053001310", "Floor deck, 20 gauge steel", "Sf", "5.80", "0.025", "1.51", "0.35", "7.66"],
    ["053001410", "Roof deck, 18 gauge steel", "Sf", "6.65", "0.035", "2.12", "0.45", "9.22"],
    ["05400", "COLD-FORMED METAL FRAMING"],
    ["054001240", "Metal furring, walls, 16\" oc", "Sf", "0.95", "0.100", "6.05", "3.90", "10.90"],
    ["054001310", "Metal framing, incl track, 18 ga load, 4\"W, 12\" oc", "Sf", "3.35", "0.055", "3.33", "3.90", "10.58"],
    ["054001320", "Metal framing, incl track, 18 ga load, 4\"W, 16\" oc", "Sf", "2.80", "0.045", "2.72", "3.90", "9.42"],
    ["054001330", "Metal framing, incl track, 18 ga load, 4\"W, 24\" oc", "Sf", "2.15", "0.035", "2.12", "3.90", "8.17"],
    ["05500", "METAL FABRICATIONS"],
    ["055001120", "Iron railings, 3-6\" high, 2 rail, standard", "Lf", "54.00", "0.150", "9.08", "3.90", "66.98"],
    ["055001140", "Handrails, wall type, 1-1/2 in rail", "Lf", "12.00", "0.150", "9.08", "3.90", "24.98"],
    ["055001210", "Ladders, 1-6\" wide", "Lf", "56.00", "0.200", "12.10", "3.90", "72.00"],
    ["055001220", "Stairways, 4' wide", "Lf", "345.00", "0.650", "39.33", "17.50", "401.83"],
    ["055001230", "Spiral stairways, 6' round", "Lf", "380.00", "0.750", "45.38", "18.00", "443.38"],
    ["055001270", "Cast column bases, 24\" x 24\"", "Ea", "235.00", "0.500", "30.25", "0.00", "265.25"]
];

const heads = [
    ["Costcode", "yellow selected"],
    ["Description", "yellow"],
    ["Unit", "yellow"],
    ["MATERIAL<br>Cost/Unit", "gray"],
    ["Labor<br>Hrs/Unit", "green"],
    ["LABOR<br>Cost/Unit", "green"],
    ["OTHER<br>Cost/Unit", "cream"],
    ["TOTAL<br>Cost/Unit", "cyan"]
];

const letters = "ABCDEFGHIJKLMNOPQRSTUV".split("");
const kinds = ["code", "text", "unit", "", "", "pink", "", "pink"];
const blanks = "<td></td>".repeat(15);

let html = "<colgroup><col class='col-n'><col class='col-a'><col class='col-b'><col class='col-c'>";
html += "<col class='col-d'>".repeat(4) + "<col class='col-h'>" + "<col class='col-i'>".repeat(14) + "<col></colgroup>";

html += "<thead><tr><th class='corner'></th>";
letters.forEach(l => {
    html += `<th${l === "A" ? " class='chosen'" : ""}>${l}</th>`;
});
html += "<th></th></tr></thead><tbody>";

html += "<tr class='titles'><th class='chosen'>1</th>";
heads.forEach(([text, css]) => {
    html += `<td class="head ${css}">${text}</td>`;
});
html += blanks + "</tr>";

rows.forEach((row, i) => {
    const section = row.length === 2;
    html += `<tr${section ? " class='section'" : ""}><th>${i + 2}</th>`;
    for (let c = 0; c < 8; c++) {
        const css = section && c > 1 ? "" : kinds[c];
        html += `<td class="${css}">${row[c] || ""}</td>`;
    }
    html += blanks + "</tr>";
});

document.getElementById("cells").innerHTML = html + "</tbody>";
```
